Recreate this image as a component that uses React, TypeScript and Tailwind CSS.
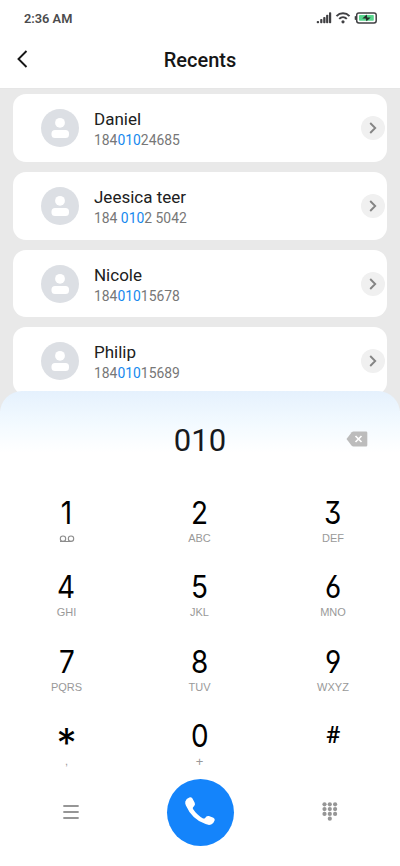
const contacts = [
  { name: "Daniel", before: "184", match: "010", after: "24685" },
  { name: "Jeesica teer", before: "184 ", match: "010", after: "2 5042" },
  { name: "Nicole", before: "184", match: "010", after: "15678" },
  { name: "Philip", before: "184", match: "010", after: "15689" },
];

// Inter's alternates: flat-top three, open six and nine
const number =
  "font-['Inter',sans-serif] text-[31px] leading-[38px] font-normal scale-x-[.9] [font-feature-settings:'cv09','cv03','cv04']";

const keys = [
  { digit: "1", letters: "", style: number },
  { digit: "2", letters: "ABC", style: number },
  { digit: "3", letters: "DEF", style: number },
  { digit: "4", letters: "GHI", style: number },
  { digit: "5", letters: "JKL", style: number },
  { digit: "6", letters: "MNO", style: number },
  { digit: "7", letters: "PQRS", style: number },
  { digit: "8", letters: "TUV", style: number },
  { digit: "9", letters: "WXYZ", style: number },
  { digit: "*", letters: ",", style: "font-['Inter',sans-serif] h-[38px] text-[40px] leading-[51px] font-normal" },
  { digit: "0", letters: "+", style: number },
  { digit: "#", letters: "", style: "text-[24px] leading-[37px] font-medium" },
];

function StatusIcons() {
  return (
    <svg width="62" height="14" viewBox="0 0 62 14" fill="none">
      {/* Signal */}
      <g fill="#404043">
        <rect x="0.7" y="10" width="2.4" height="2.2" rx="1" />
        <rect x="4.2" y="8" width="2.2" height="4.2" rx="0.8" />
        <rect x="7.2" y="6.1" width="2.3" height="6.1" rx="0.8" />
        <rect x="10.1" y="3.8" width="2.2" height="8.4" rx="0.8" />
        <rect x="13" y="1.3" width="2.2" height="10.9" rx="0.8" />
      </g>
      {/* Wifi */}
      <g stroke="#404043" strokeWidth="2">
        <path d="M20.5 5.1c3.6-3.7 9.4-3.7 13 0" />
        <path d="M23.2 7.9c2.2-2.2 5.4-2.2 7.6 0" />
      </g>
      <circle cx="27" cy="10.8" r="1.6" fill="#404043" />
      {/* Battery */}
      <rect x="40.7" y="1.9" width="19.5" height="10" rx="2.2" stroke="#404043" strokeWidth="1.5" />
      <rect x="38.7" y="5" width="1.4" height="4" rx="0.7" fill="#404043" />
      <rect x="43" y="4" width="14.8" height="5.8" rx="0.8" fill="#58d68d" />
      <path d="M50.8 3.5 46.3 7.4h3.4l.8 2.8 4.2-3.8h-3.5z" fill="#252d29" />
    </svg>
  );
}

function Avatar() {
  return (
    <svg width="38" height="38" viewBox="0 0 38 38" className="shrink-0">
      <circle cx="19" cy="19" r="19" fill="#dcdfe4" />
      <circle cx="19" cy="13.8" r="4.9" fill="#fff" />
      <rect x="10.5" y="21" width="17.5" height="8" rx="3.5" fill="#fff" />
    </svg>
  );
}

function ContactCard({ contact }: { contact: (typeof contacts)[number] }) {
  return (
    <div className="flex h-[67.5px] shrink-0 items-center rounded-[13px] bg-white pr-[2px] pl-[28.4px]">
      <Avatar />
      <div className="ml-[14.6px] flex-1 pt-[2px]">
        <div className="text-[17px] leading-[22px] text-[#202020]">{contact.name}</div>
        <div className="text-[13.9px] leading-[20px] whitespace-pre text-[#777]">
          {contact.before}
          <span className="text-[#1688ee]">{contact.match}</span>
          {contact.after}
        </div>
      </div>
      <div className="flex h-6 w-6 items-center justify-center rounded-full bg-[#f0f0f0]">
        <svg width="8" height="12" viewBox="0 0 8 12" fill="none" stroke="#858585" strokeWidth="1.9">
          <path d="m1.2 1 5 5-5 5" />
        </svg>
      </div>
    </div>
  );
}

function Voicemail() {
  return (
    <svg width="16" height="8" viewBox="0 0 16 8" fill="none" stroke="#8c8c8c" strokeWidth="1.1" className="mt-[3px]">
      <circle cx="4" cy="3.7" r="2.7" />
      <circle cx="12" cy="3.7" r="2.7" />
      <path d="M1 6.5h3.5M4 6.5h8" />
    </svg>
  );
}

export default function App() {
  return (
    <div className="flex h-[866px] w-[400px] flex-col overflow-hidden bg-white font-['Roboto',sans-serif]">
      <header className="h-[89px] shrink-0 border-b border-[#e6e6e6]">
        <div className="flex h-9 items-center justify-between pr-[22px] pl-6">
          <span className="pt-px text-[12.8px] font-semibold text-[#4b4b4d]">2:36 AM</span>
          <StatusIcons />
        </div>
        <div className="grid h-12 grid-cols-[1fr_auto_1fr] items-center px-4">
          <svg width="12" height="18" viewBox="0 0 12 18" fill="none" stroke="#161616" strokeWidth="1.9" className="mb-[2px]">
            <path d="m10.5 1-8 8 8 8" />
          </svg>
          <h1 className="text-[20px] font-medium text-[#161616]">Recents</h1>
        </div>
      </header>

      <main className="flex h-[322px] shrink-0 flex-col gap-[10.2px] overflow-hidden bg-[#e9e9e9] px-[13px] pt-[5.4px]">
        {contacts.map((contact) => (
          <ContactCard key={contact.name} contact={contact} />
        ))}
      </main>

      {/* Dial pad slides over the end of the list */}
      <section className="z-10 -mt-5 flex-1 rounded-t-[22px] bg-white bg-linear-to-b from-[#e5f1fd] via-[#f3faff] via-[7%] to-white to-[13%]">
        <div className="grid h-[98px] grid-cols-[1fr_auto_1fr] items-center pr-[32px] pl-[32px]">
          <span />
          <span className="pt-[3px] text-[31px] text-[#17191d]">010</span>
          <svg width="22" height="16" viewBox="0 0 22 16" className="mb-[2px] justify-self-end">
            <path d="M0.5 8 5.7 1.3Q6.4.5 7.5.5h12.6q1.2 0 1.2 1.2v12.6q0 1.2-1.2 1.2H7.5q-1.1 0-1.8-.8z" fill="#bcbcbc" />
            <path d="m9.5 5 6 6m0-6-6 6" stroke="#fff" strokeWidth="1.7" />
          </svg>
        </div>

        <div className="grid grid-cols-[133px_133px_134px]">
          {keys.map((key) => (
            <div key={key.digit} className="flex h-[74.3px] flex-col items-center pt-[5px] text-black">
              <span className={key.style}>{key.digit}</span>
              <span
                className={
                  key.digit === "0"
                    ? "font-['Liberation_Sans',sans-serif] text-[13px] leading-[13px] text-[#999]"
                    : "font-['Liberation_Sans',sans-serif] text-[11px] leading-[13px] text-[#999]"
                }
              >
                {key.digit === "1" ? <Voicemail /> : key.letters}
              </span>
            </div>
          ))}
        </div>

        <div className="-mt-[7.5px] grid h-[67px] grid-cols-[141px_118px_141px] items-center justify-items-center">
          <svg width="16" height="14" viewBox="0 0 16 14" stroke="#969696" strokeWidth="1.8" strokeLinecap="round">
            <path d="M1 1h14M1 7h14M1 13h14" />
          </svg>
          <div className="flex h-[67px] w-[67px] items-center justify-center rounded-full bg-[#1484fb]">
            <svg width="32" height="32" viewBox="0 0 32 32" fill="#fff">
              <path d="M1.3 5.4Q2.2 2.5 5.3 1.4 7.2.8 8.3 2.2l2.4 4.5q.8 1.8-.5 3.2L9.1 11.2q-.6.8-.1 1.7Q13 19 19.1 22.4q1 .5 1.8-.2l1.5-1.6q1.1-1 2.5-.5l4.5 1.7q1.9.9 1.2 2.7-1 3-3.4 4-2.5 1-5.6-.4Q8 23.5 1.9 9.5.9 7.2 1.3 5.4Z" />
            </svg>
          </div>
          <svg width="16" height="20" viewBox="0 0 16 20" fill="#969696">
            {[2.5, 7.8, 13.1].map((x) =>
              [2.3, 7.1, 11.9].map((y) => <circle key={`${x}-${y}`} cx={x} cy={y} r="2.1" />),
            )}
            <circle cx="7.8" cy="16.7" r="2.1" />
          </svg>
        </div>
      </section>
    </div>
  );
}
